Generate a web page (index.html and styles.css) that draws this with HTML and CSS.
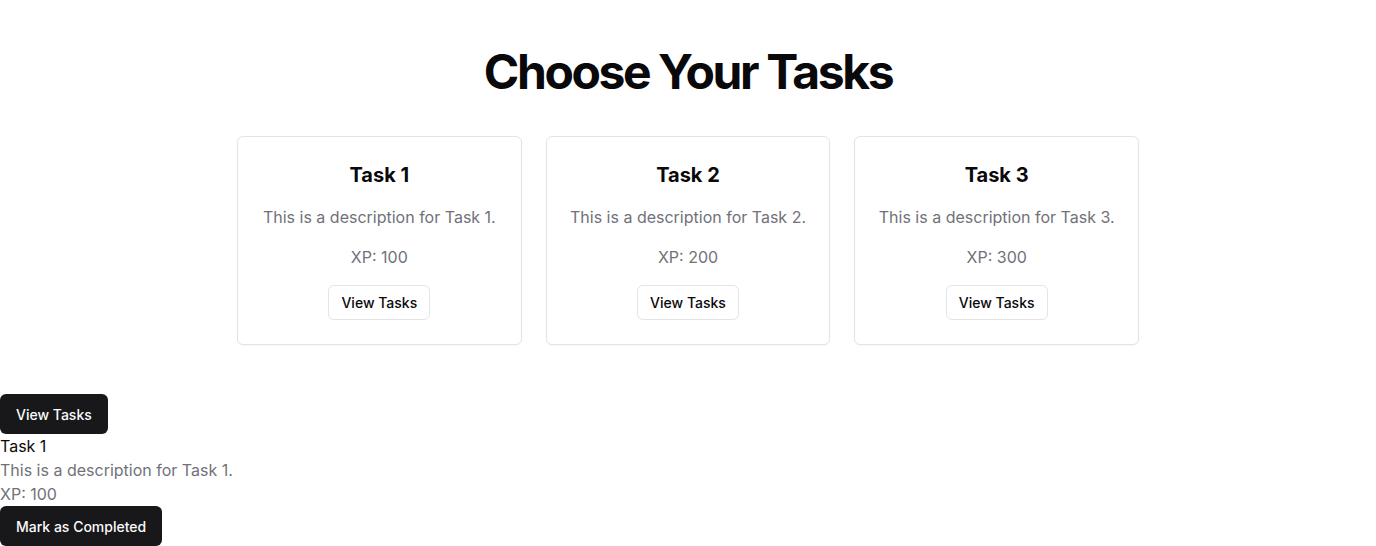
FILE: index.html
```html
<!DOCTYPE html>
<html lang="en">
<head>
<meta charset="utf-8">
<title>Choose Your Tasks</title>
<link rel="stylesheet" href="styles.css">
</head>
<body>
  <section class="picker">
    <h1 class="title">Choose Your Tasks</h1>
    <div class="grid">
      <div class="card">
        <h3 class="card-title">Task 1</h3>
        <p class="muted">This is a description for Task 1.</p>
        <p class="muted">XP: 100</p>
        <button class="btn btn-outline">View Tasks</button>
      </div>
      <div class="card">
        <h3 class="card-title">Task 2</h3>
        <p class="muted">This is a description for Task 2.</p>
        <p class="muted">XP: 200</p>
        <button class="btn btn-outline">View Tasks</button>
      </div>
      <div class="card">
        <h3 class="card-title">Task 3</h3>
        <p class="muted">This is a description for Task 3.</p>
        <p class="muted">XP: 300</p>
        <button class="btn btn-outline">View Tasks</button>
      </div>
    </div>
  </section>
  <div class="detail">
    <button class="btn btn-dark">View Tasks</button>
    <div class="detail-title">Task 1</div>
    <div class="detail-muted">This is a description for Task 1.</div>
    <div class="detail-muted">XP: 100</div>
    <button class="btn btn-dark">Mark as Completed</button>
  </div>
</body>
</html>
```
FILE: styles.css
```css
* { box-sizing: border-box; }
html, body {
  margin: 0;
  padding: 0;
  background: #ffffff;
  color: #09090b;
  font-family: Inter, "Noto Sans", sans-serif;
}
.picker {
  padding: 48px 0 49px;
  display: flex;
  flex-direction: column;
  align-items: center;
}
.title {
  margin: 0 0 40px;
  font-size: 48px;
  line-height: 48px;
  font-weight: 700;
  letter-spacing: -0.05em;
  color: #09090b;
}
.grid {
  display: grid;
  grid-template-columns: repeat(3, 1fr);
  gap: 24px;
  width: 902px;
}
.card {
  border: 1px solid #e4e4e7;
  border-radius: 6px;
  background: #fff;
  box-shadow: 0 1px 2px rgba(0,0,0,0.04);
  padding: 24px 16px 24px;
  display: flex;
  flex-direction: column;
  align-items: center;
  text-align: center;
}
.card-title {
  margin: 0 0 16px;
  font-size: 20px;
  line-height: 28px;
  font-weight: 700;
}
.muted {
  margin: 0 0 16px;
  font-size: 16px;
  line-height: 24px;
  color: #71717a;
  white-space: nowrap;
}
.btn {
  font-family: inherit;
  font-size: 14px;
  font-weight: 500;
  border-radius: 6px;
  cursor: pointer;
  display: inline-flex;
  align-items: center;
  justify-content: center;
}
.btn-outline {
  height: 35px;
  padding: 0 12px;
  background: #fff;
  border: 1px solid #e4e4e7;
  color: #09090b;
}
.btn-dark {
  height: 40px;
  padding: 0 16px;
  background: #18181b;
  border: none;
  color: #fafafa;
}
.detail {
  display: flex;
  flex-direction: column;
  align-items: flex-start;
}
.detail-title {
  font-size: 16px;
  line-height: 24px;
  color: #09090b;
}
.detail-muted {
  font-size: 16px;
  line-height: 24px;
  color: #71717a;
}
```
